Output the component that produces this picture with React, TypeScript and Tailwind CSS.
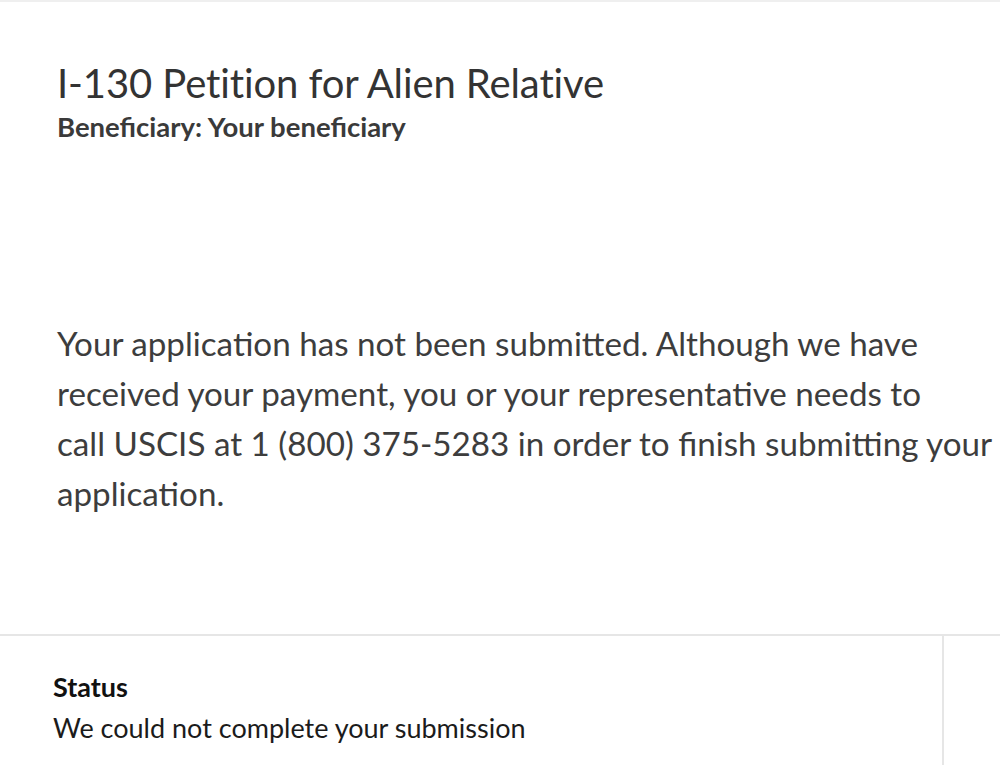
export default function App() {
  return (
    <div className="w-[1000px] h-[765px] overflow-hidden bg-white flex flex-col" style={{ fontFamily: "Lato, 'Noto Sans', sans-serif" }}>
      <div className="h-[2px] bg-[#efefef]" />
      <div className="pl-[57px] pt-[59px] h-[632px]">
        <h1 className="text-[40px] leading-[44px] text-[#333333] font-normal tracking-[-0.1px]">I-130 Petition for Alien Relative</h1>
        <div className="text-[27.5px] leading-[34px] font-bold text-[#3a3a3a] mt-[5px]">Beneficiary: Your beneficiary</div>
        <p className="mt-[174px] text-[33.2px] leading-[50px] text-[#3d3d3d] whitespace-nowrap">
          Your application has not been submitted. Although we have<br />
          received your payment, you or your representative needs to<br />
          call USCIS at 1 (800) 375-5283 in order to finish submitting your<br />
          application.
        </p>
      </div>
      <div className="h-[2px] bg-[#e6e6e6]" />
      <div className="flex flex-1">
        <div className="w-[942px] pl-[53px] pt-[34px]">
          <div className="text-[27px] leading-[34px] font-bold text-[#111111]">Status</div>
          <div className="text-[27px] leading-[36px] text-[#1b1b1b] mt-[6px]">We could not complete your submission</div>
        </div>
        <div className="w-[2px] bg-[#e6e6e6]" />
        <div className="flex-1" />
      </div>
    </div>
  );
}
